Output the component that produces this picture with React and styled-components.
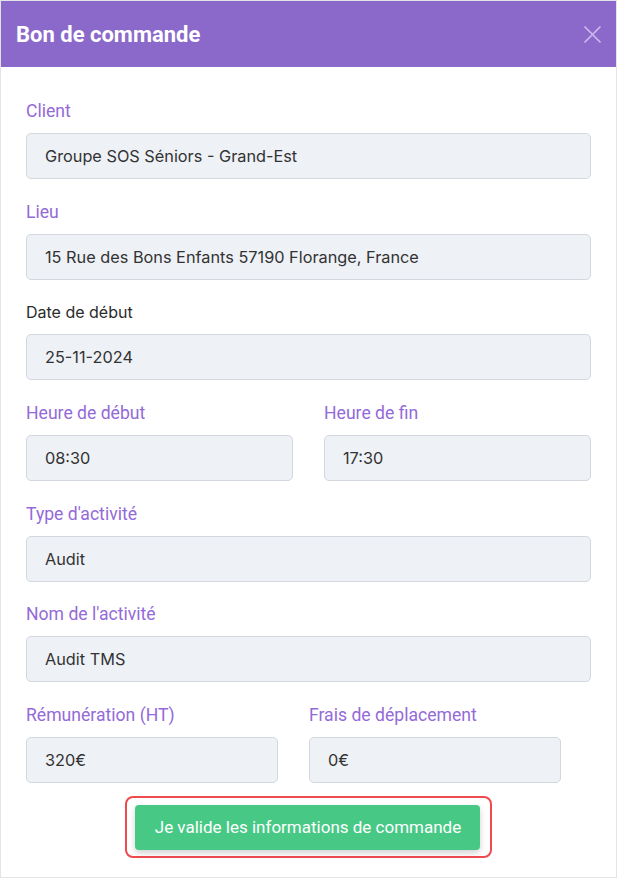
import React from 'react'
import styled, { createGlobalStyle } from 'styled-components'

const GlobalStyle = createGlobalStyle`
  * {
    box-sizing: border-box;
  }
  body {
    margin: 0;
    background: #ffffff;
    font-family: Inter, "Noto Sans", sans-serif;
  }
`

const Modal = styled.div`
  width: 617px;
  height: 878px;
  border: 1px solid #e4e4e7;
  background: #ffffff;
  display: flex;
  flex-direction: column;
`

const Header = styled.div`
  height: 66px;
  background: #8b69cb;
  display: flex;
  align-items: center;
  justify-content: space-between;
  padding: 0 15px 0 15px;
`

const Title = styled.h2`
  margin: 0;
  color: #ffffff;
  font-family: Roboto, "Liberation Sans", sans-serif;
  font-size: 22px;
  font-weight: 700;
`

const CloseButton = styled.button`
  border: 0;
  background: none;
  padding: 0;
  width: 18px;
  height: 18px;
  display: flex;
  align-items: center;
  justify-content: center;
  cursor: pointer;
`

const Body = styled.div`
  padding: 34px 25px 0 25px;
  display: flex;
  flex-direction: column;
  gap: 22.7px;
`

const Row = styled.div`
  display: grid;
  grid-template-columns: ${(props) => props.columns || '1fr'};
  column-gap: 31px;
`

const Field = styled.div`
  display: flex;
  flex-direction: column;
  gap: 12px;
`

const Label = styled.label`
  line-height: 20px;
  font-family: ${(props) => (props.dark ? 'Inter, "Noto Sans", sans-serif' : 'Roboto, "Liberation Sans", sans-serif')};
  font-size: ${(props) => (props.dark ? '16px' : '17.6px')};
  font-weight: 400;
  color: ${(props) => (props.dark ? '#2b2b2b' : '#946ad8')};
`

const Input = styled.input`
  height: 46px;
  width: 100%;
  border: 1px solid #d3d7de;
  border-radius: 5px;
  background: #eef1f6;
  padding: 0 18px;
  font-family: Inter, "Noto Sans", sans-serif;
  font-size: 16.3px;
  color: #333333;
  outline: none;
`

const Footer = styled.div`
  display: flex;
  justify-content: center;
  margin-top: -10px;
`

const Highlight = styled.div`
  border: 2px solid #ef4b4f;
  border-radius: 8px;
  padding: 7px 10px 6px 8px;
`

const SubmitButton = styled.button`
  height: 45px;
  padding: 0 19px 0 20px;
  border: 0;
  border-radius: 4px;
  background: #47c985;
  color: #ffffff;
  font-family: Roboto, "Liberation Sans", sans-serif;
  font-size: 17px;
  font-weight: 400;
  box-shadow: 0 3px 6px rgba(0, 0, 0, 0.18);
  cursor: pointer;
`

const CloseIcon = () => (
  <svg width="17" height="17" viewBox="0 0 17 17" fill="none">
    <path d="M1 1 L16 16 M16 1 L1 16" stroke="#cbb9ee" strokeWidth="1.7" strokeLinecap="round" />
  </svg>
)

const TextField = ({ label, value, dark }) => (
  <Field>
    <Label dark={dark}>{label}</Label>
    <Input readOnly value={value} />
  </Field>
)

const App = () => (
  <>
    <GlobalStyle />
    <Modal>
      <Header>
        <Title>Bon de commande</Title>
        <CloseButton aria-label="Fermer">
          <CloseIcon />
        </CloseButton>
      </Header>
      <Body>
        <Row>
          <TextField label="Client" value="Groupe SOS Séniors - Grand-Est" />
        </Row>
        <Row>
          <TextField label="Lieu" value="15 Rue des Bons Enfants 57190 Florange, France" />
        </Row>
        <Row>
          <TextField label="Date de début" value="25-11-2024" dark />
        </Row>
        <Row columns="1fr 1fr">
          <TextField label="Heure de début" value="08:30" />
          <TextField label="Heure de fin" value="17:30" />
        </Row>
        <Row>
          <TextField label="Type d'activité" value="Audit" />
        </Row>
        <Row>
          <TextField label="Nom de l'activité" value="Audit TMS" />
        </Row>
        <Row columns="252px 252px">
          <TextField label="Rémunération (HT)" value="320€" />
          <TextField label="Frais de déplacement" value="0€" />
        </Row>
        <Footer>
          <Highlight>
            <SubmitButton>Je valide les informations de commande</SubmitButton>
          </Highlight>
        </Footer>
      </Body>
    </Modal>
  </>
)

export default App
